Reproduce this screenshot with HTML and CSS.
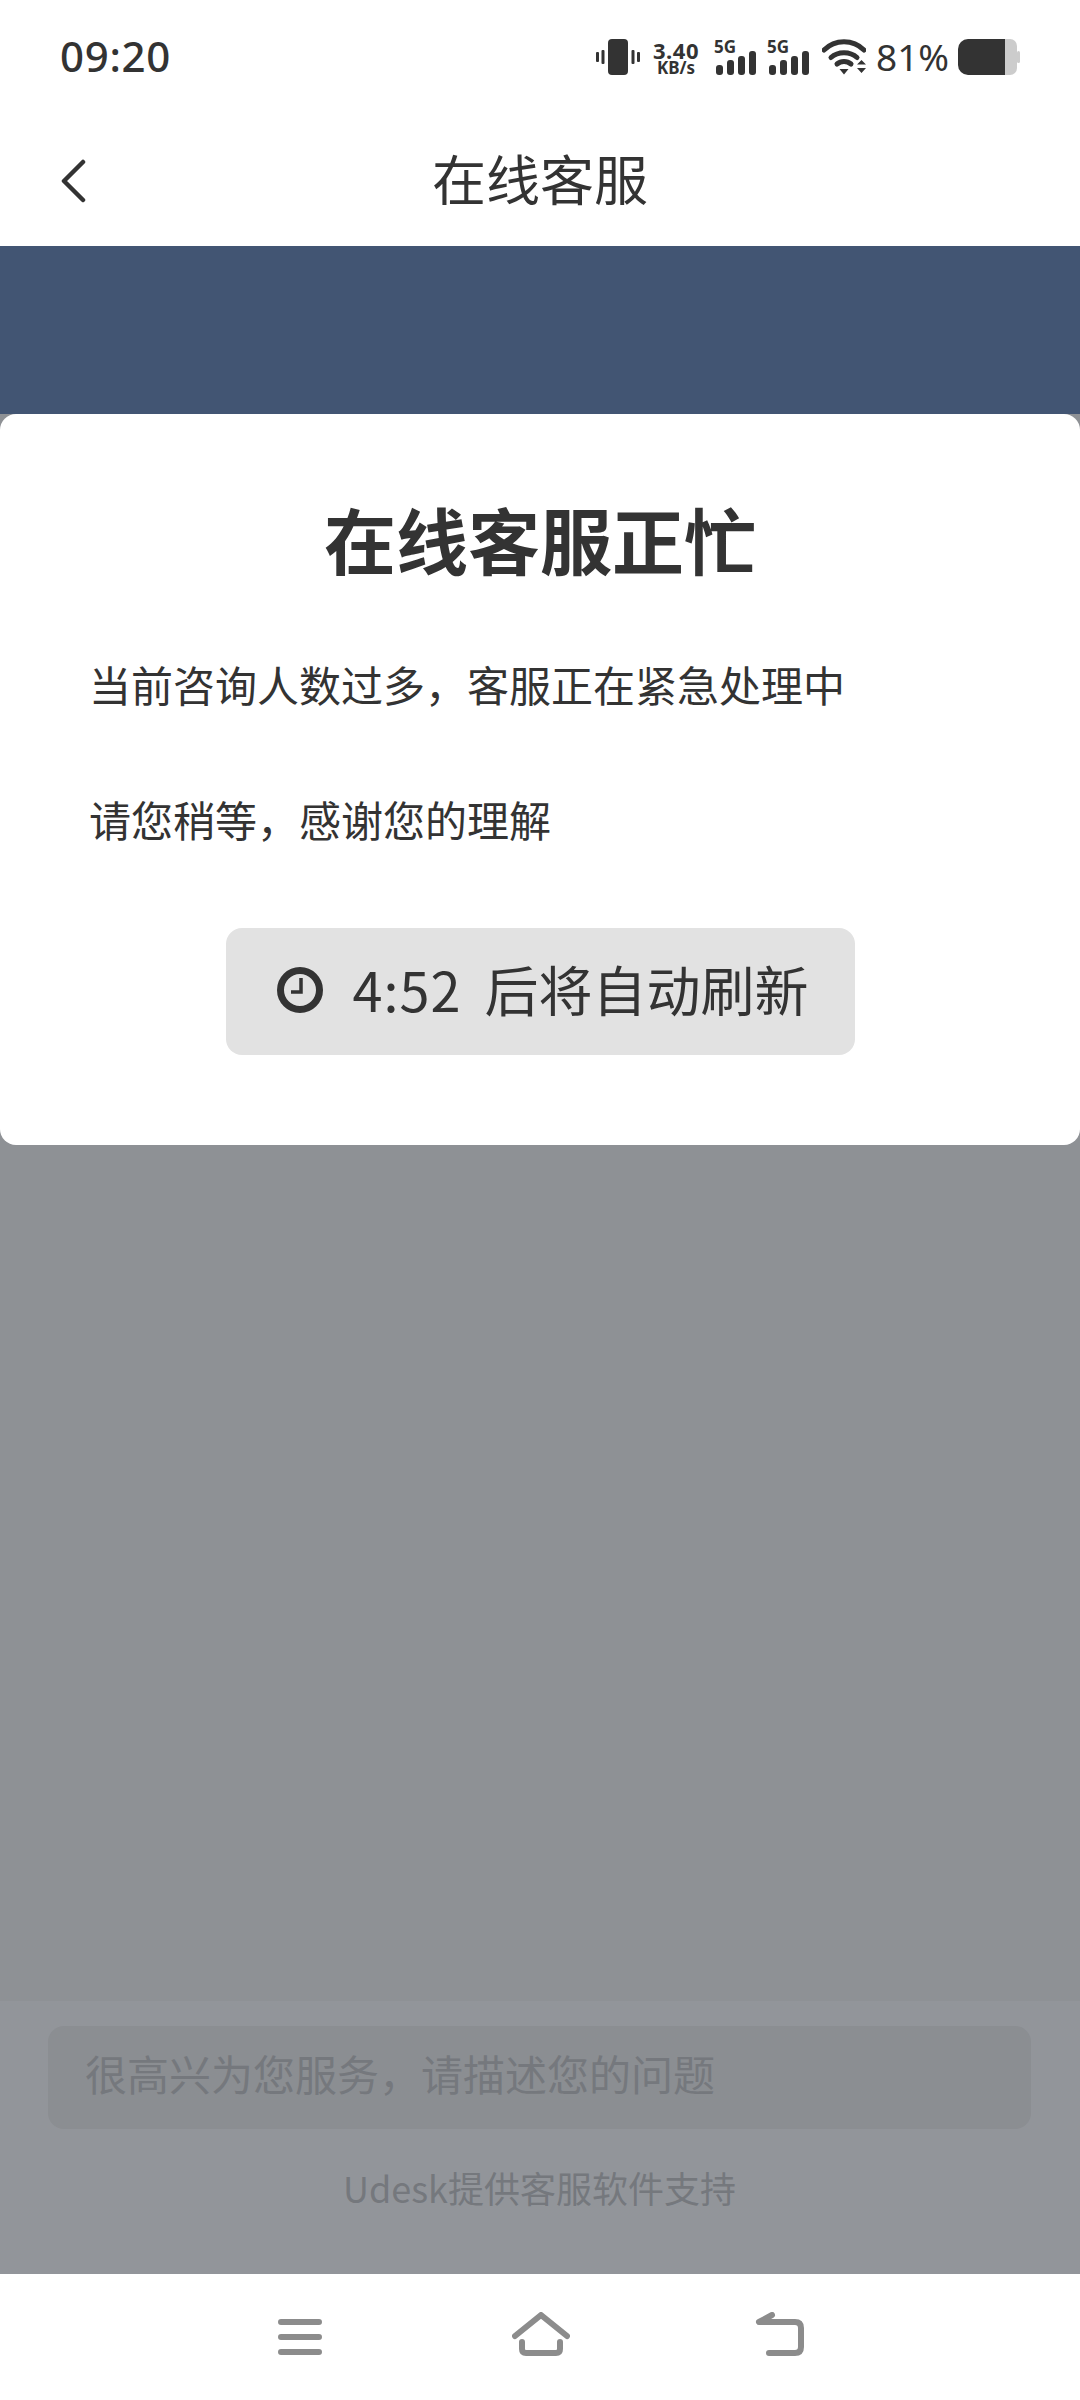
FILE: index.html
```html
<!DOCTYPE html>
<html lang="zh-CN">
<head>
<meta charset="utf-8">
<title>在线客服</title>
<link rel="stylesheet" href="styles.css">
</head>
<body>
<div class="screen">
  <header class="status">
    <span class="time">09:20</span>
    <div class="status-icons">
      <svg class="ic-vib" viewBox="0 0 44 36" width="44" height="36"><rect x="12" y="0" width="20" height="36" rx="4"/><rect x="5.500" y="11" width="3" height="14" rx="1"/><rect x="0" y="13" width="3" height="10" rx="1"/><rect x="35.500" y="11" width="3" height="14" rx="1"/><rect x="41" y="13" width="3" height="10" rx="1"/></svg>
      <div class="speed"><span class="speed-num">3.40</span><span class="speed-unit">KB/s</span></div>
      <div class="signal"><span class="sig-label">5G</span><svg viewBox="0 0 40 24" width="40" height="24"><rect x="0" y="14" width="7" height="10" rx="3"/><rect x="11" y="9" width="7" height="15" rx="3"/><rect x="22" y="5" width="7" height="19" rx="3"/><rect x="33" y="0" width="7" height="24" rx="3"/></svg></div>
      <div class="signal"><span class="sig-label">5G</span><svg viewBox="0 0 40 24" width="40" height="24"><rect x="0" y="14" width="7" height="10" rx="3"/><rect x="11" y="9" width="7" height="15" rx="3"/><rect x="22" y="5" width="7" height="19" rx="3"/><rect x="33" y="0" width="7" height="24" rx="3"/></svg></div>
      <svg class="ic-wifi" viewBox="0 0 44 36" width="44" height="36"><path class="arc" d="M2 11C13 0 31 0 42 11"/><path class="arc" d="M9 18.500C16 12 28 12 35 18.500"/><path class="arc" d="M15 25C19 21.500 25 21.500 29 25"/><path class="solid" d="M17.500 30H26.500L22 35.500Z"/><path class="solid" d="M35 25.500L39.500 21L44 25.500ZM35 29H44L39.500 34Z"/></svg>
      <span class="battery-pct">81%</span>
      <svg class="ic-batt" viewBox="0 0 62 36" width="62" height="36"><path class="batt-empty" d="M40 0H52a7 7 0 0 1 7 7V29a7 7 0 0 1-7 7H40Z"/><rect class="batt-empty" x="59" y="12" width="3" height="12" rx="1.500"/><path class="batt-full" d="M10 0H47V36H10A10 10 0 0 1 0 26V10A10 10 0 0 1 10 0Z"/></svg>
    </div>
  </header>

  <nav class="topbar">
    <svg class="back" viewBox="0 0 26 44" width="26" height="44"><path d="M23 3L4 22L23 41"/></svg>
    <h1 class="topbar-title">在线客服</h1>
  </nav>

  <main class="content">
    <div class="band"></div>
    <section class="card">
      <h2 class="card-title">在线客服正忙</h2>
      <p class="card-text first">当前咨询人数过多，客服正在紧急处理中</p>
      <p class="card-text second">请您稍等，感谢您的理解</p>
      <div class="refresh">
        <svg class="clock" viewBox="0 0 46 46" width="46" height="46"><circle cx="23" cy="23" r="19.500"/><path d="M24 11V25H14"/></svg>
        <span class="count">4:52</span>
        <span class="refresh-text">后将自动刷新</span>
      </div>
    </section>
    <div class="dim"></div>
    <footer class="composer">
      <div class="input">很高兴为您服务，请描述您的问题</div>
      <div class="support">Udesk提供客服软件支持</div>
    </footer>
  </main>

  <div class="sysnav">
    <svg viewBox="0 0 44 36" width="44" height="36"><path d="M3 3H41M3 18H41M3 33H41"/></svg>
    <svg class="home" viewBox="0 0 58 44" width="58" height="44"><path d="M3 24L29 3L55 24M10 30V37Q10 41 14 41H44Q48 41 48 37V30"/></svg>
    <svg viewBox="0 0 50 44" width="50" height="44"><path d="M18 3L5 10H41Q47 10 47 16V35Q47 41 41 41H15"/></svg>
  </div>
</div>
</body>
</html>
```
FILE: styles.css
```css
* { box-sizing: border-box; }
html, body { margin: 0; padding: 0; }
body {
  width: 1080px;
  height: 2400px;
  background: #fff;
  color: #333;
  font-family: "Noto Sans CJK SC", "Noto Sans", sans-serif;
}
.screen { display: flex; flex-direction: column; height: 2400px; }

.status {
  height: 90px;
  flex: none;
  padding: 29px 60px 6px 60px;
  display: flex;
  align-items: center;
  justify-content: space-between;
}
.time { font-family: "Noto Sans", sans-serif; font-weight: 500; font-size: 42px; line-height: 55px; letter-spacing: .7px; margin-top: -2px; }
.status-icons { display: flex; align-items: center; height: 36px; }
.status-icons svg { fill: #333; display: block; flex: none; }
.ic-vib { margin-right: 13px; }
.speed { display: flex; flex-direction: column; align-items: center; width: 46px; margin-right: 17px; font-family: "Noto Sans", sans-serif; font-weight: 700; }
.speed-num { font-size: 22px; line-height: 22px; letter-spacing: .5px; }
.speed-unit { font-size: 17px; line-height: 14px; }
.signal { position: relative; width: 40px; height: 36px; margin-right: 13px; padding-top: 12px; }
.sig-label { position: absolute; left: -2px; top: 0; font-family: "Noto Sans", sans-serif; font-size: 17px; line-height: 15px; font-weight: 700; }
.ic-wifi { margin-right: 11px; }
.ic-wifi .arc { fill: none; stroke: #333; stroke-width: 5; stroke-linecap: round; }
.ic-wifi .solid { fill: #333; }
.battery-pct { font-family: "Noto Sans", sans-serif; font-size: 37px; line-height: 36px; margin-left: -1px; margin-right: 11px; width: 71px; white-space: nowrap; }
.ic-batt .batt-empty { fill: #ccc; }
.ic-batt .batt-full { fill: #333; }

.topbar {
  position: relative;
  height: 156px;
  flex: none;
  display: flex;
  align-items: center;
  justify-content: center;
}
.back { position: absolute; left: 60px; top: 69px; fill: none; stroke: #333; stroke-width: 4.500; stroke-linecap: round; stroke-linejoin: round; }
.topbar-title { margin: 19px 0 0; font-size: 54px; font-weight: 400; line-height: 80px; }

.content { flex: 1; display: flex; flex-direction: column; min-height: 0; background: #8e9195; }
.band { height: 168px; flex: none; background: #425573; }
.card {
  flex: none;
  height: 731px;
  background: #fff;
  border-radius: 16px;
  padding: 74px 89px 0;
  display: flex;
  flex-direction: column;
}
.card-title { margin: 0; font-size: 72px; font-weight: 700; line-height: 100px; text-align: center; }
.card-text { margin: 0; font-size: 42px; line-height: 60px; }
.card-text.first { margin-top: 66px; }
.card-text.second { margin-top: 75px; }
.refresh {
  margin-top: 79px;
  align-self: center;
  width: 629px;
  height: 127px;
  border-radius: 16px;
  background: #e2e2e2;
  display: flex;
  align-items: center;
  padding-left: 51px;
  font-size: 54px;
}
.clock { flex: none; fill: none; stroke: #333; stroke-width: 7; margin-top: -4px; }
.clock path { stroke-width: 3.500; }
.count { margin-left: 30px; margin-right: 23px; line-height: 70px; margin-top: -5px; letter-spacing: 1px; }
.refresh-text { line-height: 70px; margin-top: -5px; }

.dim { flex: 1; }
.composer { height: 273px; flex: none; background: #92959a; padding: 25px 49px 0 48px; }
.input {
  height: 103px;
  background: #8b8e92;
  border-radius: 16px;
  padding-left: 37px;
  font-size: 42px;
  line-height: 94px;
  color: #75787d;
}
.support { margin-top: 31px; text-align: center; font-size: 36px; line-height: 54px; color: #75787d; }

.sysnav {
  height: 126px;
  flex: none;
  display: flex;
  padding: 38px 276px 0 278px;
  justify-content: space-between;
  align-items: flex-start;
}
.sysnav svg { display: block; flex: none; fill: none; stroke: #8c8c8c; stroke-width: 6; stroke-linecap: round; stroke-linejoin: round; }
.sysnav svg:first-child { margin-top: 7px; }
.sysnav .home { margin-left: 6px; }
```
